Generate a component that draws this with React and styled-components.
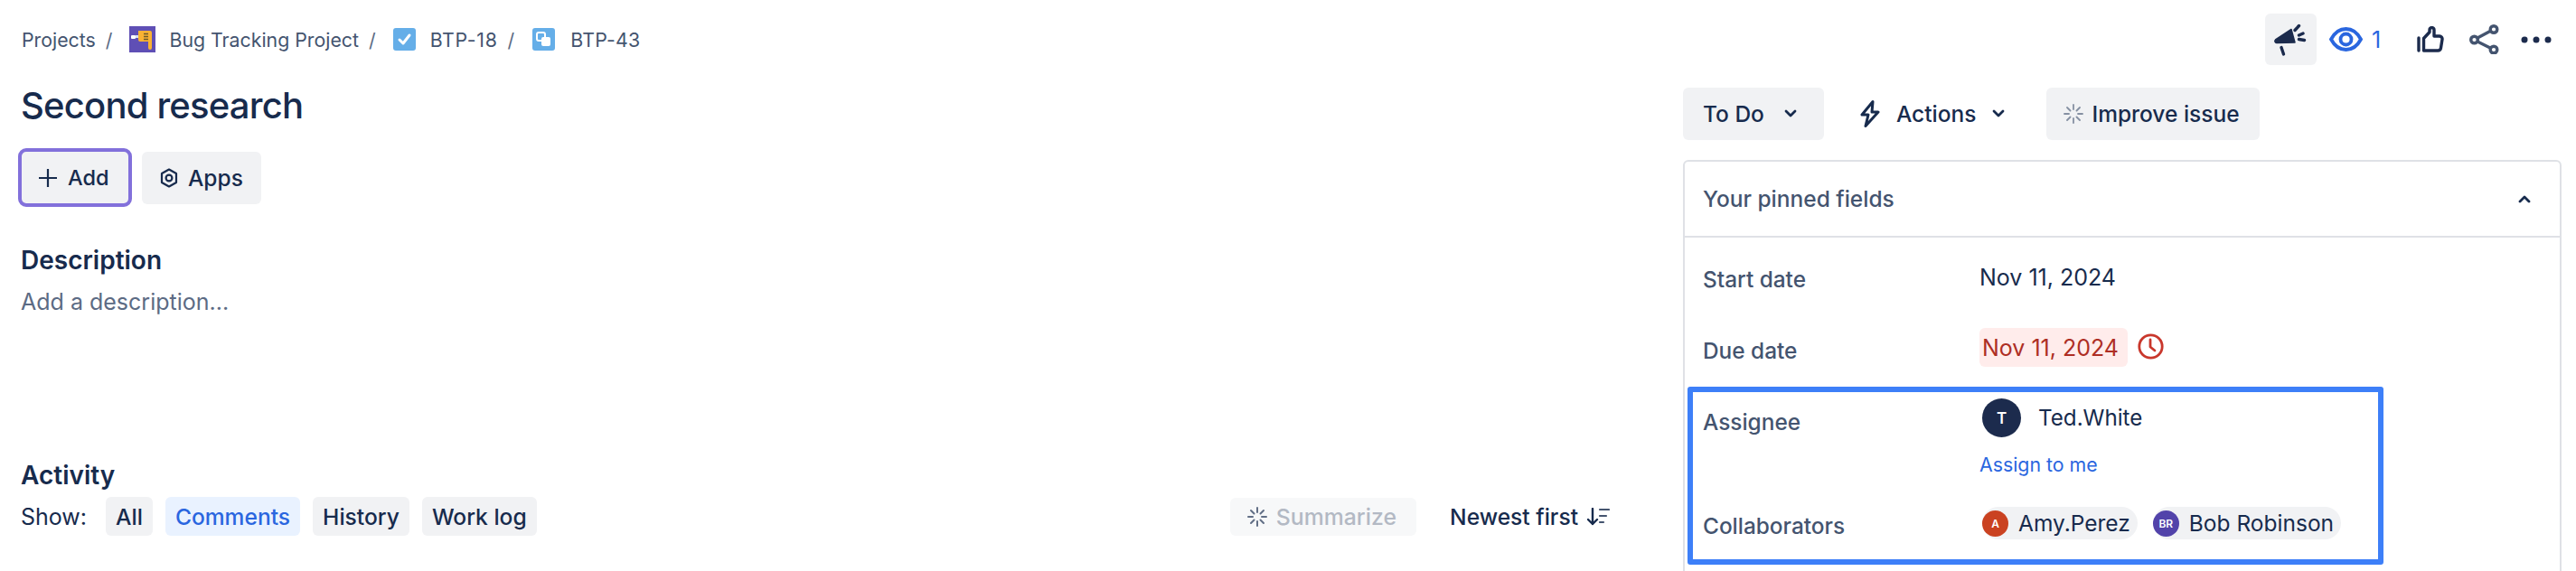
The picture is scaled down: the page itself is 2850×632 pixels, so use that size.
import React from 'react'
import styled, { createGlobalStyle } from 'styled-components'

const GlobalStyle = createGlobalStyle`
    html, body {
        margin: 0;
        padding: 0;
        background: #fff;
    }
    body {
        font-family: Inter, "Liberation Sans", sans-serif;
        color: #172b4d;
    }
    * { box-sizing: border-box; }
`

const Page = styled.div`
    width: 2850px;
    height: 632px;
    overflow: hidden;
`

const TopBar = styled.header`
    display: flex;
    justify-content: space-between;
    align-items: center;
    height: 57px;
    margin-top: 15px;
    padding: 0 16px 0 24px;
`

const Crumbs = styled.nav`
    display: flex;
    align-items: center;
    font-size: 21.3px;
    color: #44546f;
`

const Crumb = styled.span`
    display: flex;
    align-items: center;
    gap: ${p => p.$gap || 15}px;
    letter-spacing: ${p => p.$ls || 0}px;
`

const Slash = styled.span`
    margin: 0 ${p => p.$after || 19}px 0 11px;
    color: #5c6b84;
`

const TopActions = styled.div`
    display: flex;
    align-items: center;
`

const IconSquare = styled.button`
    width: 57px;
    height: 57px;
    display: flex;
    align-items: center;
    justify-content: center;
    padding: 0;
    border: 0;
    border-radius: 6px;
    background: ${p => p.$bg || 'transparent'};
    margin-left: ${p => p.$ml || 0}px;
`

const WatchCount = styled.span`
    display: flex;
    align-items: center;
    gap: 10px;
    width: 83px;
    margin-left: 14px;
    font-size: 25px;
    color: #2a66df;
`

const Columns = styled.div`
    display: grid;
    grid-template-columns: 1862px 972px;
`

const Main = styled.main`
    padding: 0 81px 0 23px;
`

const Title = styled.h1`
    margin: 23px 0 0;
    font-size: 40px;
    line-height: 44px;
    font-weight: 550;
    letter-spacing: -0.8px;
    color: #172b4d;
`

const ButtonRow = styled.div`
    display: flex;
    align-items: center;
    gap: 11px;
    margin: 25px 0 0 -3px;
`

const Btn = styled.button`
    display: flex;
    align-items: center;
    justify-content: center;
    gap: ${p => p.$gap || 12}px;
    height: ${p => p.$h || 58}px;
    padding: 0 ${p => p.$pr ?? p.$px ?? 22}px 0 ${p => p.$px ?? 22}px;
    margin-left: ${p => p.$ml || 0}px;
    border: 0;
    border-radius: 6px;
    background: ${p => p.$bg || '#f1f2f4'};
    color: ${p => p.$color || '#172b4d'};
    font: 500 ${p => p.$fs || 24.5}px Inter, "Liberation Sans", sans-serif;
    white-space: nowrap;
`

const FocusBtn = styled(Btn)`
    height: 65px;
    width: 126px;
    padding: 0 0 0 18px;
    justify-content: flex-start;
    border: 4px solid #8270db;
    border-radius: 9px;
`

const SectionTitle = styled.h2`
    margin: ${p => p.$mt}px 0 0;
    font-size: 28px;
    line-height: 36px;
    font-weight: 600;
    color: #172b4d;
`

const Placeholder = styled.p`
    margin: 13px 0 0;
    font-size: 25px;
    line-height: 30px;
    color: #5c6b84;
`

const ActivityBar = styled.div`
    display: flex;
    align-items: center;
    height: 43px;
    margin-top: 6px;
`

const ShowLabel = styled.span`
    font-size: 25px;
    margin-right: 21px;
`

const Tabs = styled.div`
    display: flex;
    gap: 14px;
`

const SortWrap = styled.div`
    display: flex;
    align-items: center;
    margin-left: auto;
`

const SortLabel = styled.span`
    display: flex;
    align-items: center;
    gap: 10px;
    margin-left: 37px;
    font-size: 24.6px;
    font-weight: 500;
`

const Side = styled.aside`
    padding-top: 25px;
`

const StatusRow = styled.div`
    display: flex;
    align-items: center;
`

const Card = styled.section`
    position: relative;
    height: 500px;
    margin-top: 22px;
    border: 2px solid #dfe1e6;
    border-radius: 6px;
`

const CardHead = styled.div`
    display: flex;
    align-items: center;
    justify-content: space-between;
    height: 84px;
    padding: 0 32px 0 20px;
    border-bottom: 2px solid #dfe1e6;
    font-size: 24.5px;
    font-weight: 500;
    color: #44546f;
`

const FieldList = styled.div`
    padding: 27px 0 0 20px;
`

const FieldRow = styled.div`
    display: grid;
    grid-template-columns: 306px 1fr;
    height: ${p => p.$h}px;
`

const FieldLabel = styled.div`
    padding-top: ${p => (p.$mt || 0) + 1}px;
    font-size: 24.4px;
    line-height: 36px;
    font-weight: 500;
    color: #44546f;
`

const FieldValue = styled.div`
    padding-top: 2px;
    font-size: 25px;
    line-height: 30px;
`

const DueValue = styled.div`
    display: flex;
    align-items: center;
    align-self: start;
    gap: 11px;
`

const DueChip = styled.span`
    display: flex;
    align-items: center;
    height: 43px;
    padding: 1px 10px 0 3px;
    border-radius: 6px;
    background: #ffeceb;
    color: #ae2e24;
    font-size: 25px;
`

const ClockWrap = styled.span`
    display: flex;
    margin-bottom: 3px;
`

const AssigneeLine = styled.div`
    display: flex;
    align-items: center;
    gap: 19px;
    padding-left: 3px;
    font-size: 24.2px;
`

const Avatar = styled.span`
    display: flex;
    align-items: center;
    justify-content: center;
    flex: none;
    width: ${p => p.$size}px;
    height: ${p => p.$size}px;
    border-radius: 50%;
    background: ${p => p.$bg};
    color: #fff;
    font-size: ${p => p.$fs}px;
    font-weight: 600;
`

const AssignLink = styled.a`
    display: block;
    margin-top: 15px;
    font-size: 21.3px;
    line-height: 30px;
    color: #2a66df;
`

const Chips = styled.div`
    display: flex;
    gap: 17px;
    padding-left: 3px;
`

const Chip = styled.span`
    display: flex;
    align-items: center;
    gap: 11px;
    height: 36px;
    padding-right: 8px;
    border-radius: 18px;
    background: #f1f2f4;
    font-size: 24.5px;
`

const Highlight = styled.div`
    position: absolute;
    left: 3px;
    top: 249px;
    width: 770px;
    height: 197px;
    border: 6px solid #3d7ff8;
    border-radius: 3px;
    pointer-events: none;
`

const Logo = () => (
    <svg width="29" height="29" viewBox="0 0 29 29">
        <rect width="29" height="29" fill="#5f4fb5" />
        <rect x="2" y="10" width="5" height="4" rx="1" fill="#fff" />
        <rect x="7" y="10" width="3" height="3" fill="#d7e2f5" />
        <path d="M10 5h13a2 2 0 0 1 2 2v17a2 2 0 0 1-4 0v-7h-9a2 2 0 0 1-2-2z" fill="#f9b233" />
        <path d="M16 8.5h5M16 11.5h5M16 14.5h5" stroke="#6c5a2a" strokeWidth="1.4" />
    </svg>
)

const TaskIcon = () => (
    <svg width="25" height="25" viewBox="0 0 25 25">
        <rect width="25" height="25" rx="3" fill="#65aee8" />
        <path d="M7 13l4 4 7-9" fill="none" stroke="#fff" strokeWidth="3" strokeLinecap="round" strokeLinejoin="round" />
    </svg>
)

const SubtaskIcon = () => (
    <svg width="25" height="25" viewBox="0 0 25 25">
        <rect width="25" height="25" rx="3" fill="#65aee8" />
        <rect x="5" y="5" width="9" height="9" rx="2" fill="none" stroke="#fff" strokeWidth="2" />
        <rect x="10" y="10" width="10" height="10" rx="2" fill="#fff" />
    </svg>
)

const Megaphone = () => (
    <svg width="57" height="57" viewBox="0 0 57 57">
        <path d="M11.500 29L29 17.500l4 14.500-20 .5a2 2 0 0 1-1.500-3.500z" fill="#1c2b4d" stroke="#1c2b4d" strokeWidth="1.500" strokeLinejoin="round" />
        <path d="M18 37.500l2.500 7.500" stroke="#1c2b4d" strokeWidth="3.400" strokeLinecap="round" />
        <path d="M33 18.500l4.500-5M37.500 24l4.500-2M37.500 28.500l6 1" stroke="#1c2b4d" strokeWidth="3.400" strokeLinecap="round" />
    </svg>
)

const Eye = () => (
    <svg width="37" height="27" viewBox="0 0 37 27">
        <path d="M2 13.500C6 6 11.500 2 18.500 2S31 6 35 13.500C31 21 25.500 25 18.500 25S6 21 2 13.500z" fill="none" stroke="#2a66df" strokeWidth="3.800" />
        <circle cx="18.500" cy="13.500" r="6" fill="none" stroke="#2a66df" strokeWidth="3.800" />
    </svg>
)

const Thumb = () => (
    <svg width="30" height="29" viewBox="0 0 30 29">
        <path d="M2 13v14" stroke="#1c2b4d" strokeWidth="3.400" strokeLinecap="round" />
        <path d="M7.500 27V13.500l6.500-7V4a2.500 2.500 0 0 1 5 0v7h6a3 3 0 0 1 3 3.500l-1.500 9.500a3.500 3.500 0 0 1-3.500 3z" fill="none" stroke="#1c2b4d" strokeWidth="3.400" strokeLinejoin="round" />
    </svg>
)

const Share = () => (
    <svg width="33" height="33" viewBox="0 0 33 33">
        <circle cx="5.500" cy="17" r="3.800" fill="none" stroke="#44546f" strokeWidth="3.400" />
        <circle cx="27" cy="5.500" r="3.800" fill="none" stroke="#44546f" strokeWidth="3.400" />
        <circle cx="27" cy="28" r="3.800" fill="none" stroke="#44546f" strokeWidth="3.400" />
        <path d="M9 15l14-7.500M9 19l14 7" stroke="#44546f" strokeWidth="3.400" />
    </svg>
)

const Dots = () => (
    <svg width="34" height="8" viewBox="0 0 34 8">
        <circle cx="4" cy="4" r="3.500" fill="#1c2b4d" />
        <circle cx="17" cy="4" r="3.500" fill="#1c2b4d" />
        <circle cx="30" cy="4" r="3.500" fill="#1c2b4d" />
    </svg>
)

const Plus = () => (
    <svg width="22" height="22" viewBox="0 0 22 22">
        <path d="M11 1v20M1 11h20" stroke="#172b4d" strokeWidth="2.200" />
    </svg>
)

const AppsIcon = () => (
    <svg width="20" height="22" viewBox="0 0 20 22">
        <path d="M10 1.500l8 4.500v10l-8 4.500L2 16V6z" fill="none" stroke="#172b4d" strokeWidth="2.200" strokeLinejoin="round" />
        <circle cx="10" cy="11" r="3.400" fill="none" stroke="#172b4d" strokeWidth="2.200" />
    </svg>
)

const Sparkle = ({ color, width = 2 }) => (
    <svg width="22" height="22" viewBox="0 0 22 22">
        <path
            d="M11 1v5M11 16v5M1 11h5M16 11h5M4 4l3.500 3.500M14.500 14.500L18 18M18 4l-3.500 3.500M7.500 14.500L4 18"
            stroke={color}
            strokeWidth={width}
            strokeLinecap="round"
        />
    </svg>
)

const Chevron = ({ up }) => (
    <svg width="14" height="10" viewBox="0 0 14 10">
        <path d={up ? 'M2 8l5-5 5 5' : 'M2 2l5 5 5-5'} fill="none" stroke="#172b4d" strokeWidth="2.800" strokeLinecap="round" strokeLinejoin="round" />
    </svg>
)

const Bolt = () => (
    <svg width="22" height="30" viewBox="0 0 22 30">
        <path d="M14 1.500L2 16h7l-3 12.500L20 13h-7z" fill="none" stroke="#172b4d" strokeWidth="3" strokeLinejoin="round" />
    </svg>
)

const Clock = () => (
    <svg width="29" height="29" viewBox="0 0 29 29">
        <circle cx="14.500" cy="14.500" r="12.700" fill="none" stroke="#c9372c" strokeWidth="2.800" />
        <path d="M14 7v8l5 4" fill="none" stroke="#c9372c" strokeWidth="2.800" strokeLinecap="round" strokeLinejoin="round" />
    </svg>
)

const SortIcon = () => (
    <svg width="25" height="20" viewBox="0 0 25 20">
        <path d="M6 1v17M1 13l5 5 5-5" fill="none" stroke="#172b4d" strokeWidth="2.400" strokeLinecap="round" strokeLinejoin="round" />
        <path d="M14 2h10M14 9h7M14 16h4" stroke="#44546f" strokeWidth="2.200" strokeLinecap="round" />
    </svg>
)

const tabs = [
    { label: 'All' },
    { label: 'Comments', active: true },
    { label: 'History' },
    { label: 'Work log' },
]

export default function App() {
    return (
        <Page>
            <GlobalStyle />
            <TopBar>
                <Crumbs>
                    <Crumb>Projects</Crumb>
                    <Slash>/</Slash>
                    <Crumb><Logo />Bug Tracking Project</Crumb>
                    <Slash>/</Slash>
                    <Crumb $ls={0.7} $gap={16}><TaskIcon />BTP-18</Crumb>
                    <Slash $after={20}>/</Slash>
                    <Crumb $ls={0.2} $gap={17}><SubtaskIcon />BTP-43</Crumb>
                </Crumbs>
                <TopActions>
                    <IconSquare $bg="#f1f2f4"><Megaphone /></IconSquare>
                    <WatchCount><Eye />1</WatchCount>
                    <IconSquare><Thumb /></IconSquare>
                    <IconSquare $ml={3}><Share /></IconSquare>
                    <IconSquare><Dots /></IconSquare>
                </TopActions>
            </TopBar>
            <Columns>
                <Main>
                    <Title>Second research</Title>
                    <ButtonRow>
                        <FocusBtn $gap={11} $fs={23.5}><Plus />Add</FocusBtn>
                        <Btn $px={20} $gap={11}><AppsIcon />Apps</Btn>
                    </ButtonRow>
                    <SectionTitle $mt={41}>Description</SectionTitle>
                    <Placeholder>Add a description...</Placeholder>
                    <SectionTitle $mt={159}>Activity</SectionTitle>
                    <ActivityBar>
                        <ShowLabel>Show:</ShowLabel>
                        <Tabs>
                            {tabs.map(t => (
                                <Btn
                                    key={t.label}
                                    $h={43}
                                    $px={11}
                                    $fs={24.6}
                                    $bg={t.active ? '#e9f2ff' : undefined}
                                    $color={t.active ? '#2a66df' : undefined}
                                >
                                    {t.label}
                                </Btn>
                            ))}
                        </Tabs>
                        <SortWrap>
                            <Btn $h={42} $px={19} $pr={22} $gap={10} $fs={24.8} $bg="#f7f8f9" $color="#b3b9c4"><Sparkle color="#626f86" />Summarize</Btn>
                            <SortLabel>Newest first<SortIcon /></SortLabel>
                        </SortWrap>
                    </ActivityBar>
                </Main>
                <Side>
                    <StatusRow>
                        <Btn $pr={30} $gap={22}>To Do<Chevron /></Btn>
                        <Btn $ml={22} $bg="transparent" $gap={18} $px={18}><Bolt />Actions<Chevron /></Btn>
                        <Btn $ml={28} $gap={9} $px={19} $pr={22}><Sparkle color="#8590a2" width={1.800} />Improve issue</Btn>
                    </StatusRow>
                    <Card>
                        <CardHead>Your pinned fields<Chevron up /></CardHead>
                        <FieldList>
                            <FieldRow $h={73}>
                                <FieldLabel>Start date</FieldLabel>
                                <FieldValue>Nov 11, 2024</FieldValue>
                            </FieldRow>
                            <FieldRow $h={78}>
                                <FieldLabel $mt={6}>Due date</FieldLabel>
                                <DueValue>
                                    <DueChip>Nov 11, 2024</DueChip>
                                    <ClockWrap><Clock /></ClockWrap>
                                </DueValue>
                            </FieldRow>
                            <FieldRow $h={120}>
                                <FieldLabel $mt={7}>Assignee</FieldLabel>
                                <div>
                                    <AssigneeLine>
                                        <Avatar $size={43} $bg="#1c2b4d" $fs={17}>T</Avatar>
                                        Ted.White
                                    </AssigneeLine>
                                    <AssignLink>Assign to me</AssignLink>
                                </div>
                            </FieldRow>
                            <FieldRow $h={40}>
                                <FieldLabel $mt={2}>Collaborators</FieldLabel>
                                <Chips>
                                    <Chip><Avatar $size={29} $bg="#ca4221" $fs={12}>A</Avatar>Amy.Perez</Chip>
                                    <Chip><Avatar $size={29} $bg="#5243aa" $fs={12}>BR</Avatar>Bob Robinson</Chip>
                                </Chips>
                            </FieldRow>
                        </FieldList>
                        <Highlight />
                    </Card>
                </Side>
            </Columns>
        </Page>
    )
}
